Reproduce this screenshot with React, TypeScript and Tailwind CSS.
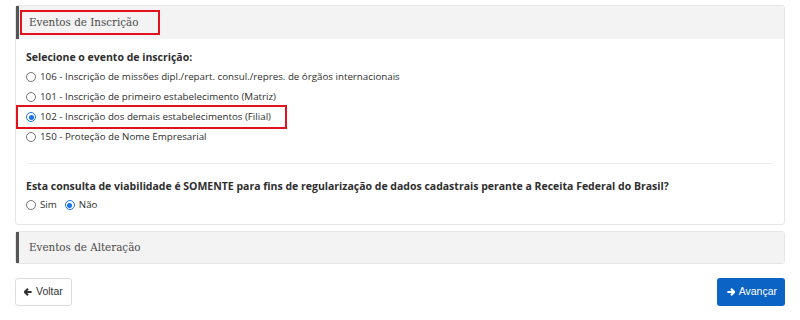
import React from 'react';

function Radio({ checked }: { checked?: boolean }) {
  return (
    <span
      className={
        'inline-flex items-center justify-center w-[10px] h-[10px] rounded-full border ' +
        (checked ? 'border-[#1a73e8]' : 'border-[#777]')
      }
    >
      {checked && <span className="w-[5px] h-[5px] rounded-full bg-[#1a73e8]" />}
    </span>
  );
}

function Option({ label, checked, marked }: { label: string; checked?: boolean; marked?: boolean }) {
  return (
    <div className="h-[20px] flex items-center">
      <span
        className={
          'flex items-center gap-[4px] h-[20px] whitespace-nowrap ' +
          (marked ? 'outline-2 outline-[#e3111d] -ml-[8px] pl-[8px] w-[267px]' : '')
        }
      >
        <Radio checked={checked} />
        <span>{label}</span>
      </span>
    </div>
  );
}

export default function App() {
  const events = [
    { label: '106 - Inscrição de missões dipl./repart. consul./repres. de órgãos internacionais' },
    { label: '101 - Inscrição de primeiro estabelecimento (Matriz)' },
    { label: '102 - Inscrição dos demais estabelecimentos (Filial)', checked: true, marked: true },
    { label: '150 - Proteção de Nome Empresarial' },
  ];

  return (
    <div className="w-[800px] h-[320px] bg-white px-[15px] pt-[5px] text-[#2e2e2e] font-['Open_Sans',sans-serif] text-[9.75px]">
      {/* Eventos de Inscrição */}
      <div className="border border-[#e6e6e6] rounded-[3px]">
        <div className="h-[33px] bg-[#f3f3f3] border-l-[3px] border-l-[#555] flex items-center pl-[3px]">
          <span className="outline-2 outline-[#e3111d] h-[21px] w-[136px] flex items-center pl-[7px] whitespace-nowrap font-['DejaVu_Serif_Condensed','Liberation_Serif',serif] text-[11.5px] text-[#4a4a4a]">
            Eventos de Inscrição
          </span>
        </div>
        <div className="px-[10px] pt-[10px] pb-[10px]">
          <div className="font-bold text-[10.5px] h-[18px] flex items-center">Selecione o evento de inscrição:</div>
          {events.map((e) => (
            <Option key={e.label} label={e.label} checked={e.checked} marked={e.marked} />
          ))}
          <div className="border-t border-[#eee] mt-[16px]" />
          <div className="font-bold text-[10.5px] mt-[14px] h-[18px] flex items-center whitespace-nowrap">
            Esta consulta de viabilidade é SOMENTE para fins de regularização de dados cadastrais perante a Receita Federal do Brasil?
          </div>
          <div className="h-[18px] flex items-center gap-[8px]">
            <span className="flex items-center gap-[4px]">
              <Radio />
              <span>Sim</span>
            </span>
            <span className="flex items-center gap-[4px]">
              <Radio checked />
              <span>Não</span>
            </span>
          </div>
        </div>
      </div>

      {/* Eventos de Alteração */}
      <div className="mt-[6px] border border-[#e6e6e6] rounded-[3px]">
        <div className="h-[31px] bg-[#f3f3f3] border-l-[3px] border-l-[#555] flex items-center pl-[10px] whitespace-nowrap font-['DejaVu_Serif_Condensed','Liberation_Serif',serif] text-[11.5px] text-[#4a4a4a]">
          Eventos de Alteração
        </div>
      </div>

      {/* Botões */}
      <div className="mt-[14px] flex justify-between font-['Liberation_Sans',sans-serif] text-[10.5px]">
        <button className="h-[28px] pl-[8px] pr-[8px] flex items-center gap-[4px] border border-[#ddd] rounded-[3px] bg-white text-[#333]">
          <svg width="8" height="8" viewBox="0 0 10 10">
            <path d="M5 1 L1 5 L5 9 M1.5 5 H9.5" stroke="#333" strokeWidth="2.6" fill="none" />
          </svg>
          Voltar
        </button>
        <button className="h-[28px] pl-[10px] pr-[8px] flex items-center gap-[4px] rounded-[3px] bg-[#0b63c5] text-white">
          <svg width="8" height="8" viewBox="0 0 10 10">
            <path d="M5 1 L9 5 L5 9 M0.5 5 H8.5" stroke="#fff" strokeWidth="2.6" fill="none" />
          </svg>
          Avançar
        </button>
      </div>
    </div>
  );
}
